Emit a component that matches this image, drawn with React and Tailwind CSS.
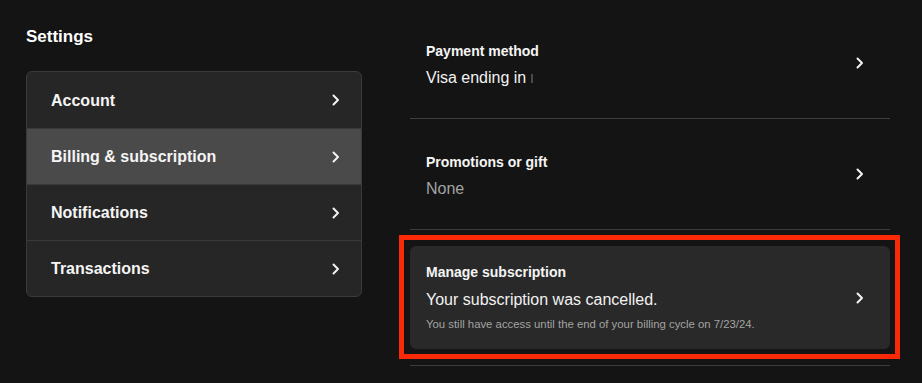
const Chevron = () => (
  <svg width="8" height="12" viewBox="0 0 8 12" fill="none">
    <path
      d="M1.5 1.5 L6 6 L1.5 10.5"
      stroke="#f2f2f2"
      strokeWidth="2"
      strokeLinecap="round"
      strokeLinejoin="round"
    />
  </svg>
);

const menu = [
  { label: "Account" },
  { label: "Billing & subscription", active: true },
  { label: "Notifications" },
  { label: "Transactions" },
];

const DetailRow = ({ title, children }) => (
  <div className="flex h-[110px] items-center justify-between pl-4 pr-[26px]">
    <div className="pt-[3px]">
      <div className="text-[14px] leading-[20px] font-bold text-[#f5f5f5]">
        {title}
      </div>
      <div className="mt-[6px] text-base leading-[22px]">{children}</div>
    </div>
    <Chevron />
  </div>
);

const App = () => {
  return (
    <div className="flex h-[383px] w-[922px] overflow-hidden bg-[#141414] font-['Liberation_Sans',Arial,sans-serif] text-white">
      {/* left nav */}
      <div className="ml-[26px] w-[336px] shrink-0 pt-[25px]">
        <h2 className="text-[17px] leading-6 font-bold">Settings</h2>
        <div className="mt-[22px] overflow-hidden rounded-md border border-[#3a3a3a] bg-[#262626]">
          {menu.map((item, i) => (
            <div
              key={item.label}
              className={`flex h-14 items-center justify-between pl-6 pr-[21px] ${
                i > 0 ? "border-t border-[#3a3a3a]" : ""
              } ${item.active ? "bg-[#4a4a4a]" : ""}`}
            >
              <span className="pt-px text-base font-bold text-[#f5f5f5]">
                {item.label}
              </span>
              <Chevron />
            </div>
          ))}
        </div>
      </div>

      {/* right details */}
      <div className="ml-[48px] mt-2 w-[480px] shrink-0">
        <DetailRow title="Payment method">
          <span className="text-[#f2f2f2]">Visa ending in</span>
          <span className="ml-[5px] inline-block h-[9px] w-[2px] bg-[#4a4a4a] align-middle" />
        </DetailRow>
        <div className="h-px bg-[#3d3d3d]" />
        <DetailRow title="Promotions or gift">
          <span className="text-[#a3a3a3]">None</span>
        </DetailRow>
        <div className="h-px bg-[#3d3d3d]" />
        <div className="py-4">
          <div className="relative flex h-[103px] items-center justify-between rounded-md bg-[#292929] pl-4 pr-[26px]">
            <div className="self-start pt-[17px]">
              <div className="text-[14px] leading-[18px] font-bold text-[#f5f5f5]">
                Manage subscription
              </div>
              <div className="mt-[7px] text-base leading-6 text-[#f2f2f2]">
                Your subscription was cancelled.
              </div>
              <div className="mt-1 text-[11.35px] leading-4 text-[#a3a3a3]">
                You still have access until the end of your billing cycle on
                7/23/24.
              </div>
            </div>
            <Chevron />
            {/* annotation box */}
            <div className="pointer-events-none absolute -top-[11px] -left-[11px] -right-[10px] -bottom-[10px] border-[5px] border-[#fa2a08]" />
          </div>
        </div>
        <div className="h-px bg-[#3d3d3d]" />
      </div>
    </div>
  );
};

export default App;
